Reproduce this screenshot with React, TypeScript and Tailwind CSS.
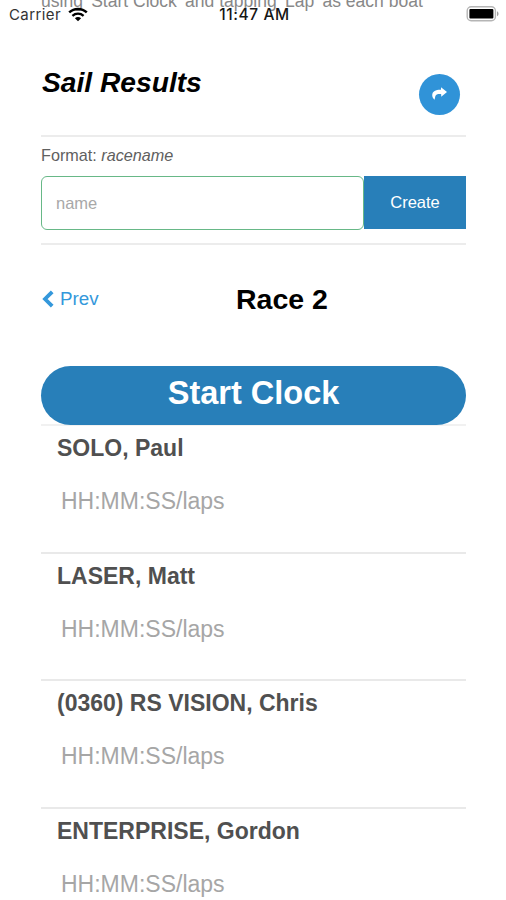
import React from "react";

const boats = [
  "SOLO, Paul",
  "LASER, Matt",
  "(0360) RS VISION, Chris",
  "ENTERPRISE, Gordon",
];

function StatusBar() {
  return (
    <div className="absolute inset-x-0 top-0 z-10 h-[28px] font-['Inter',sans-serif] text-[15px] leading-[18px] text-[#151515]">
      <div className="absolute left-[9px] top-[6px] flex items-center gap-[6px]">
        <span className="w-[53px] whitespace-nowrap tracking-[0.4px] text-[#333]">Carrier</span>
        <svg width="20" height="15" viewBox="0 0 20 15" fill="none" className="-mt-[2px]">
          <path d="M1.2 5.4C6.2.7 13.8.7 18.8 5.4" stroke="#000" strokeWidth="2.5" />
          <path d="M4.4 8.8C7.6 5.9 12.4 5.9 15.6 8.8" stroke="#000" strokeWidth="2.3" />
          <path d="M10 14.2L6.9 11.2C8.6 9.6 11.4 9.6 13.1 11.2Z" fill="#000" />
        </svg>
      </div>
      <span className="absolute inset-x-0 top-[6px] pl-[3px] text-center text-[15.5px] font-medium tracking-[0.6px]">
        11:47 AM
      </span>
      <svg width="34" height="16" viewBox="0 0 34 16" fill="none" className="absolute left-[466px] top-[6px]">
        <rect x="1.2" y="0.8" width="28.2" height="14" rx="4" stroke="#b5b5b5" strokeWidth="1.4" />
        <rect x="3.4" y="3" width="24" height="9.6" rx="1" fill="#000" />
        <path d="M31 5.2C33 6 33 9.4 31 10.2Z" fill="#a0a0a0" />
      </svg>
    </div>
  );
}

function BoatRow({ name }: { name: string }) {
  return (
    <div className="h-[127.5px] shrink-0 border-t-2 border-[#e9e9e9] pl-4 first:border-[#f1f1f1]">
      <h3 className="pt-[8px] text-[23px] font-bold leading-[28px] text-[#505050]">{name}</h3>
      <input
        className="mt-[24px] block h-[30px] w-full pl-1 text-[23px] leading-[30px] outline-none placeholder:text-[#a6a6a6]"
        placeholder="HH:MM:SS/laps"
      />
    </div>
  );
}

export default function App() {
  return (
    <div className="relative h-[900px] w-[506px] overflow-hidden bg-white font-['Liberation_Sans',Arial,sans-serif]">
      <StatusBar />
      <div className="flex flex-col pl-[41px] pr-10">
        <p className="-mt-[9px] h-[20px] whitespace-nowrap text-[17.55px] leading-[20px] text-[#888]">
          using 'Start Clock' and tapping 'Lap' as each boat
        </p>

        <header className="flex h-[124px] items-start justify-between pt-[55px]">
          <h1 className="pl-[1px] text-[28.2px] font-bold italic leading-[32px] text-black">Sail Results</h1>
          <button className="mr-[6px] mt-[8px] flex h-[41px] w-[41px] items-center justify-center rounded-full bg-[#3093d8] text-white">
            <svg width="15" height="13" viewBox="0 0 14 12" fill="currentColor" className="-mt-[2px]">
              <path d="M8.4 0.2L14 4.6L8.6 9V6.6C5.6 6.4 3.6 6.8 3.1 8.6L2.4 11.8C1.1 10.8.2 9.2.2 7.4C.4 3.8 4 2.4 8.4 2.6Z" />
            </svg>
          </button>
        </header>

        <section className="h-[110px] border-y-2 border-[#ececec]">
          <p className="pt-[8px] text-[16.2px] leading-[20px] text-[#606060]">
            Format: <em>racename</em>
          </p>
          <div className="mt-[11px] flex h-[54px]">
            <input
              className="w-[323px] rounded-[6px] border-[1.5px] border-[#67b887] pl-[14px] text-[16.5px] outline-none placeholder:text-[#a8a8a8]"
              placeholder="name"
            />
            <button className="h-[53px] flex-1 bg-[#287fb9] text-[16.5px] text-white">Create</button>
          </div>
        </section>

        <nav className="flex h-[121px] items-start pt-[37px]">
          <a href="#" className="flex h-[34px] w-[195px] items-center text-[18.8px] text-[#3498db]">
            <svg width="12" height="18" viewBox="0 0 12 18" fill="none" className="ml-[1px] mr-[6px]">
              <path d="M10.2 1.8L3 9L10.2 16.2" stroke="currentColor" strokeWidth="3.8" />
            </svg>
            Prev
          </a>
          <h2 className="text-[28.5px] font-bold leading-[34px] text-black">Race 2</h2>
        </nav>

        <button className="relative h-[59px] shrink-0 rounded-full bg-[#287fb9] pb-[5px] text-[32.5px] font-bold leading-[54px] text-white">
          Start Clock
        </button>
        <div className="-mt-[1px]">
          {boats.map((boat) => (
            <BoatRow key={boat} name={boat} />
          ))}
        </div>
      </div>
    </div>
  );
}
